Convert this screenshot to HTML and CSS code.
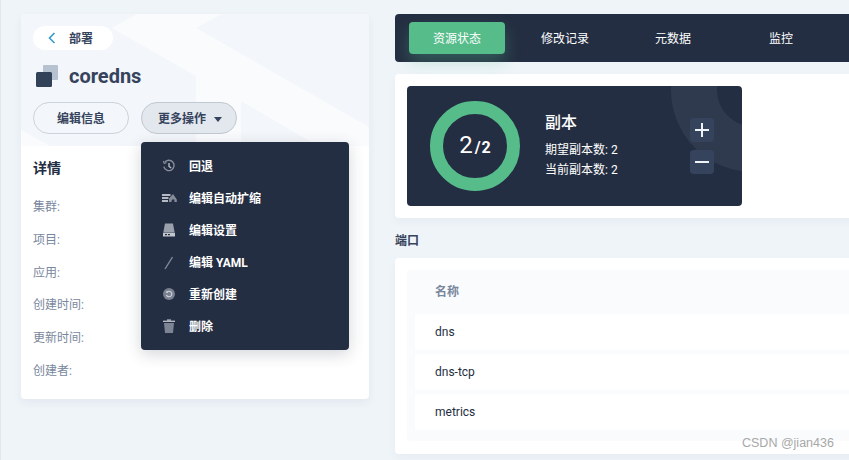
FILE: index.html

```html
<!DOCTYPE html>
<html lang="en">
<head>
    <meta charset="UTF-8">
    <meta name="viewport" content="width=device-width, initial-scale=1.0">
    <title>coredns - 部署</title>
    <link rel="stylesheet" href="styles.css">
</head>
<body>

    <div class="page">
        <aside class="side">
            <div class="side-head">
                <svg class="side-bg" width="348" height="132" viewBox="0 0 348 132">
                    <path d="M116 0 L201 0 L175 14 L348 113 L348 132 L175 132 L175 62 L91 14 Z" fill="#fafbfd"/>
                    <path d="M220 87 L220 132 L297 132 Z" fill="#f3f6fa"/>
                    <path d="M0 116 L0 132 L29 132 Z" fill="#fafbfd"/>
                </svg>
                <a class="back-pill">
                    <svg width="8" height="12" viewBox="0 0 8 12"><path d="M6.5 1 L1.5 6 L6.5 11" fill="none" stroke="#369ac9" stroke-width="1.6"/></svg>
                    <span>部署</span>
                </a>
                <div class="name-row">
                    <svg width="22" height="22" viewBox="0 0 22 22">
                        <rect x="7" y="0" width="15" height="15" rx="1" fill="#b6c2cf"/>
                        <rect x="0" y="7" width="16" height="15" rx="1.5" fill="#324359"/>
                    </svg>
                    <h1>coredns</h1>
                </div>
                <div class="head-buttons">
                    <button class="pill-button">编辑信息</button>
                    <button class="pill-button pill-active">更多操作<i class="caret"></i></button>
                </div>
            </div>
            <div class="details">
                <h3>详情</h3>
                <ul>
                    <li>集群:</li>
                    <li>项目:</li>
                    <li>应用:</li>
                    <li>创建时间:</li>
                    <li>更新时间:</li>
                    <li>创建者:</li>
                </ul>
            </div>

            <ul class="menu">
                <li>
                    <svg width="16" height="16" viewBox="0 0 16 16" fill="none" stroke="#858c9a" stroke-width="1.4"><path d="M3.6 4.4 A5.2 5.2 0 1 1 2.8 8.6"/><path d="M2.2 3 L3.2 5.4 L5.6 4.8" stroke-width="1.1"/><path d="M8 5 V8.4 L10.2 10" stroke="#b4b9c2"/></svg>
                    <span>回退</span>
                </li>
                <li>
                    <svg width="16" height="16" viewBox="0 0 16 16" fill="#b4b9c2"><rect x="1" y="4" width="8.5" height="2"/><rect x="1" y="7" width="6.5" height="2"/><rect x="1" y="10" width="6" height="2"/><path d="M8 12 L8 8.5 L12 4 L15.8 9.5 L15.8 12 L13.4 12 L13.4 9.5 L11 9.5 L10.4 12 Z" fill="#858c9a"/></svg>
                    <span>编辑自动扩缩</span>
                </li>
                <li>
                    <svg width="16" height="16" viewBox="0 0 16 16" fill="#9aa0ac"><path d="M4 1.5 H12 L13.6 10 H2.4 Z"/><rect x="2" y="10.6" width="12" height="4" rx="0.6" fill="#c2c6cd"/><rect x="4" y="12" width="2" height="1.2" fill="#242e42"/><rect x="7" y="12" width="2" height="1.2" fill="#242e42"/></svg>
                    <span>编辑设置</span>
                </li>
                <li>
                    <svg width="16" height="16" viewBox="0 0 16 16"><path d="M11.5 3 L4 15" stroke="#858c9a" stroke-width="1.4" fill="none"/></svg>
                    <span>编辑 YAML</span>
                </li>
                <li>
                    <svg width="16" height="16" viewBox="0 0 16 16"><circle cx="8" cy="8" r="6" fill="#79808f"/><path d="M5.7 6.4 A2.8 2.8 0 1 1 5.4 9" fill="none" stroke="#d5d8dd" stroke-width="1.1"/><path d="M4.8 5 L5.4 7 L7.4 6.4" fill="#d5d8dd"/></svg>
                    <span>重新创建</span>
                </li>
                <li>
                    <svg width="16" height="16" viewBox="0 0 16 16" fill="#7d8595"><rect x="2" y="2.6" width="12" height="1.4" fill="#b4b9c2"/><rect x="6" y="1.4" width="4" height="1.4" fill="#b4b9c2"/><path d="M3 5 H13 L12 15 H4 Z"/></svg>
                    <span>删除</span>
                </li>
            </ul>
        </aside>

        <main class="content">
            <nav class="tabs">
                <a class="tab tab-active">资源状态</a>
                <a class="tab">修改记录</a>
                <a class="tab">元数据</a>
                <a class="tab">监控</a>
            </nav>

            <section class="card status-card">
                <div class="replica">
                    <i class="replica-bg"></i>
                    <div class="ring">
                        <span class="ring-cur">2</span><span class="ring-total">/ 2</span>
                    </div>
                    <div class="replica-info">
                        <h2>副本</h2>
                        <p>期望副本数: 2</p>
                        <p>当前副本数: 2</p>
                    </div>
                    <div class="replica-btns">
                        <button class="step-button"><i class="bar-h"></i><i class="bar-v"></i></button>
                        <button class="step-button"><i class="bar-h"></i></button>
                    </div>
                </div>
            </section>

            <h4 class="section-title">端口</h4>

            <section class="card ports-card">
                <div class="table">
                    <div class="table-head">名称</div>
                    <div class="table-row">dns</div>
                    <div class="table-row">dns-tcp</div>
                    <div class="table-row">metrics</div>
                </div>
            </section>
        </main>
    </div>

    <div class="watermark">CSDN @jian436</div>

</body>
</html>
```

FILE: styles.css

```css
* { box-sizing: border-box; }
html, body {
    margin: 0;
    padding: 0;
    height: 460px;
    overflow: hidden;
}
body {
    position: relative;
    font-family: Roboto, 'Noto Sans CJK SC', sans-serif;
    font-size: 12px;
    color: #242e42;
    background-color: #eff4f9;
    border-left: 1px solid #e3e6ea;
}
h1, h2, h3, h4, p, ul { margin: 0; padding: 0; }
ul { list-style: none; }

.page {
    display: flex;
    align-items: flex-start;
    gap: 26px;
    padding: 14px 0 0 20px;
}

/* left column */
.side {
    position: relative;
    flex: 0 0 348px;
    height: 385px;
    background-color: white;
    border-radius: 4px;
    box-shadow: 0px 4px 8px rgba(36, 46, 66, 0.06);
}
.side-head {
    position: relative;
    height: 132px;
    padding: 12px 12px 0;
    background-color: #f3f6fa;
    border-radius: 4px 4px 0 0;
    overflow: hidden;
}
.side-bg {
    position: absolute;
    top: 0;
    left: 0;
}
.back-pill {
    position: relative;
    display: flex;
    align-items: center;
    width: 80px;
    height: 24px;
    padding-left: 15px;
    gap: 13px;
    background-color: white;
    border-radius: 12px;
    font-weight: bold;
    color: #36435c;
}
.back-pill span { margin-bottom: 2px; }
.name-row {
    position: relative;
    display: flex;
    align-items: center;
    gap: 11px;
    margin: 15px 0 0 3px;
    height: 22px;
}
.name-row h1 {
    font-size: 20px;
    font-weight: bold;
    color: #36435c;
}
.head-buttons {
    position: relative;
    display: flex;
    gap: 12px;
    margin-top: 15px;
}
.pill-button {
    display: flex;
    align-items: center;
    justify-content: center;
    width: 96px;
    height: 32px;
    padding: 0 0 2px;
    font-family: inherit;
    font-size: 12px;
    font-weight: bold;
    color: #36435c;
    background: transparent;
    border: 1px solid #ccd3db;
    border-radius: 16px;
}
.pill-active {
    background-color: #e3e7ee;
    border-color: #c1c9d1;
    padding-left: 2px;
}
.caret {
    margin: 4px 0 0 8px;
    border-left: 4.5px solid transparent;
    border-right: 4.5px solid transparent;
    border-top: 5px solid #36435c;
}
.details {
    padding: 13px 12px 0;
}
.details h3 {
    font-size: 14px;
    font-weight: bold;
    line-height: 18px;
    color: #242e42;
}
.details ul {
    margin-top: 14px;
    color: #79879c;
}
.details li {
    height: 32.8px;
    line-height: 33px;
}

.menu {
    position: absolute;
    top: 128px;
    left: 120px;
    width: 208px;
    padding: 8px 0;
    background-color: #242e42;
    border-radius: 4px;
    box-shadow: 0px 4px 16px rgba(36, 46, 66, 0.2);
}
.menu li {
    display: flex;
    align-items: center;
    gap: 12px;
    height: 32px;
    padding-left: 20px;
    color: white;
    font-weight: bold;
}
.menu li span { margin-bottom: 2px; }

/* right column */
.content {
    flex: 1;
    min-width: 0;
    margin-right: -40px;
}
.tabs {
    display: flex;
    gap: 12px;
    height: 48px;
    padding: 8px 14px;
    background-color: #242e42;
    border-radius: 4px;
}
.tab {
    width: 96px;
    height: 32px;
    line-height: 34px;
    text-align: center;
    color: white;
    border-radius: 4px;
}
.tab-active {
    background-color: #55bc8a;
    box-shadow: 0px 8px 16px rgba(85, 188, 138, 0.3);
}
.card {
    padding: 12px;
    background-color: white;
    border-radius: 4px;
    box-shadow: 0px 4px 8px rgba(36, 46, 66, 0.04);
}
.status-card {
    margin-top: 12px;
    height: 144px;
}
.replica {
    position: relative;
    display: flex;
    align-items: center;
    width: 335px;
    height: 120px;
    padding-left: 23px;
    background-color: #242e42;
    border-radius: 4px;
    overflow: hidden;
    color: white;
}
.replica-bg {
    position: absolute;
    top: -78px;
    left: 264px;
    width: 164px;
    height: 164px;
    border: 46px solid #2f3a4e;
    border-radius: 50%;
}
.ring {
    display: flex;
    align-items: center;
    justify-content: center;
    flex: 0 0 90px;
    height: 90px;
    padding-bottom: 2px;
    border: 13.5px solid #55bc8a;
    border-radius: 50%;
}
.ring-cur { font-size: 24px; }
.ring-total {
    margin: 4px 0 0 2px;
    font-size: 16px;
    font-weight: bold;
    word-spacing: -3px;
}
.replica-info {
    position: relative;
    margin: 0 0 2px 25px;
    width: 145px;
    line-height: 20px;
}
.replica-info h2 {
    font-size: 16px;
    font-weight: 500;
    line-height: 24px;
    margin-bottom: 5px;
}
.replica-btns {
    position: relative;
    display: flex;
    flex-direction: column;
    gap: 8px;
}
.step-button {
    position: relative;
    width: 24px;
    height: 24px;
    padding: 0;
    background-color: #36435c;
    border: none;
    border-radius: 4px;
}
.bar-h, .bar-v {
    position: absolute;
    background-color: #eff4f9;
}
.bar-h { top: 11px; left: 5px; width: 14px; height: 2px; }
.bar-v { top: 5px; left: 11px; width: 2px; height: 14px; }

.section-title {
    margin-top: 15px;
    font-size: 12px;
    font-weight: bold;
    line-height: 16px;
    color: #36435c;
}
.ports-card {
    margin-top: 9px;
    height: 196px;
}
.table {
    height: 171px;
    padding: 0 8px;
    background-color: #f9fbfd;
    border-radius: 4px;
}
.table-head {
    height: 44px;
    line-height: 44px;
    padding-left: 20px;
    font-weight: bold;
    color: #79879c;
}
.table-row {
    height: 36px;
    line-height: 36px;
    margin-bottom: 4px;
    padding-left: 20px;
    background-color: white;
}

.watermark {
    position: absolute;
    top: 436px;
    left: 741px;
    font-family: 'Liberation Sans', sans-serif;
    font-size: 12.5px;
    line-height: 15px;
    color: #a8a8a8;
}
```
